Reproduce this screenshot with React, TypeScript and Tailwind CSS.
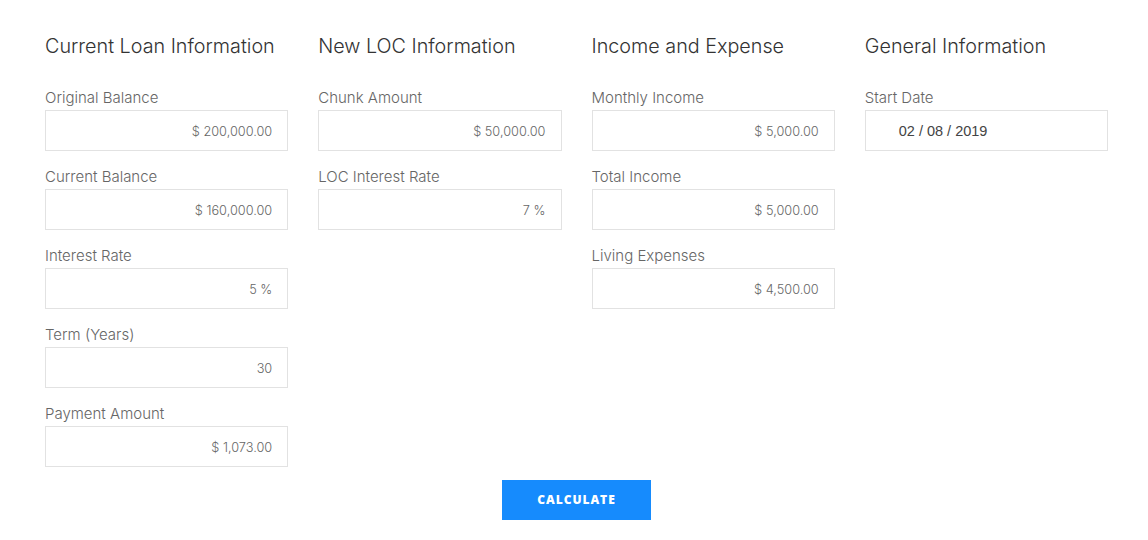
import React from "react";

type Field = { label: string; value: string };

const columns: { title: string; fields: Field[] }[] = [
  {
    title: "Current Loan Information",
    fields: [
      { label: "Original Balance", value: "$ 200,000.00" },
      { label: "Current Balance", value: "$ 160,000.00" },
      { label: "Interest Rate", value: "5 %" },
      { label: "Term (Years)", value: "30" },
      { label: "Payment Amount", value: "$ 1,073.00" },
    ],
  },
  {
    title: "New LOC Information",
    fields: [
      { label: "Chunk Amount", value: "$ 50,000.00" },
      { label: "LOC Interest Rate", value: "7 %" },
    ],
  },
  {
    title: "Income and Expense",
    fields: [
      { label: "Monthly Income", value: "$ 5,000.00" },
      { label: "Total Income", value: "$ 5,000.00" },
      { label: "Living Expenses", value: "$ 4,500.00" },
    ],
  },
];

const font = { fontFamily: "Inter, 'Open Sans', sans-serif" };

function FieldRow({ label, value }: Field) {
  return (
    <div className="mb-[16px]">
      <div className="text-[15px] leading-[20px] font-light text-[#666]">{label}</div>
      <div className="mt-[2px] h-[41px] border border-[#e2e2e2] flex items-center justify-end pt-[2px] pr-[15px] text-[12.75px] font-light text-[#666]">
        {value}
      </div>
    </div>
  );
}

function Heading({ children }: { children: React.ReactNode }) {
  return (
    <h2 className="text-[19.75px] leading-[24px] font-light text-[#333] mb-[30px] whitespace-nowrap">
      {children}
    </h2>
  );
}

export default function App() {
  return (
    <div className="w-[1148px] h-[540px] bg-white" style={font}>
      <div className="pl-[45px] pr-[40px] pt-[34px]">
        <div className="grid grid-cols-4 gap-x-[30px]">
          {columns.map((c) => (
            <div key={c.title}>
              <Heading>{c.title}</Heading>
              {c.fields.map((f) => (
                <FieldRow key={f.label} {...f} />
              ))}
            </div>
          ))}
          <div>
            <Heading>General Information</Heading>
            <div className="mb-[16px]">
              <div className="text-[15px] leading-[20px] font-light text-[#666]">Start Date</div>
              <div
                className="mt-[2px] h-[41px] border border-[#e2e2e2] flex items-center pt-[2px] pl-[33px] text-[14.5px] text-[#444]"
                style={{ fontFamily: "'Liberation Sans', Arial, sans-serif" }}
              >
                02 / 08 / 2019
              </div>
            </div>
          </div>
        </div>
        <div className="flex justify-center mt-[-3px]">
          <button
            className="w-[149px] h-[40px] bg-[#168bfd] text-white text-[12px] font-extrabold tracking-[0.08em]"
            style={{ fontFamily: "'Open Sans', sans-serif" }}
          >
            CALCULATE
          </button>
        </div>
      </div>
    </div>
  );
}
